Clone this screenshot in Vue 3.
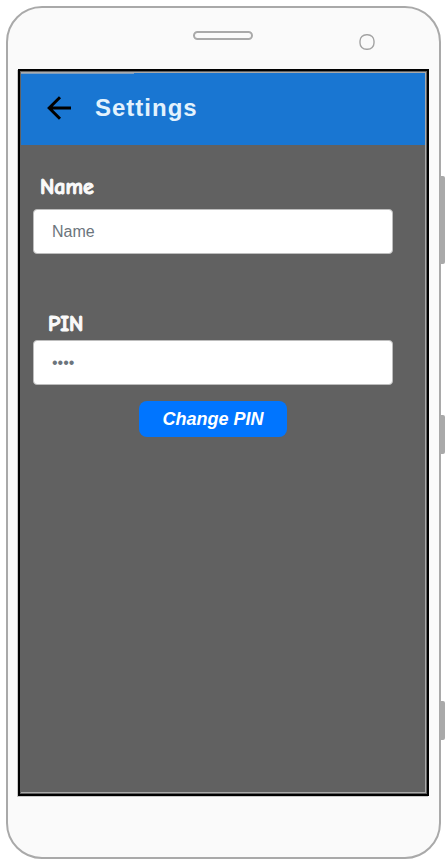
<script setup>
import { ref } from 'vue'

const name = ref('')
const pin = ref('')
</script>

<template>
  <div class="page">
    <div class="phone">
      <span class="speaker"></span>
      <svg class="camera" viewBox="0 0 16 16" width="16" height="16" fill="none" stroke="#a3a3a3" stroke-width="1.4">
        <rect x="1" y="0.7" width="14" height="14.6" rx="6.4" />
      </svg>
      <span class="side-key volume"></span>
      <span class="side-key power"></span>
      <span class="side-key lower"></span>

      <main class="screen">
        <div class="view">
          <header class="bar">
            <div class="progress"></div>
            <div class="bar-row">
              <button class="back" type="button" aria-label="Back">
                <svg viewBox="0 0 24 24" width="24" height="24" fill="none" stroke="#000" stroke-width="3">
                  <path d="M13 1.2 2.2 12 13 22.8M2.2 12H24" />
                </svg>
              </button>
              <h1>Settings</h1>
            </div>
          </header>

          <form class="form" @submit.prevent>
            <label class="name-label" for="name">Name</label>
            <input id="name" v-model="name" type="text" placeholder="Name" />
            <label class="pin-label" for="pin">PIN</label>
            <input id="pin" v-model="pin" type="password" placeholder="••••" />
            <button class="submit" type="submit">Change PIN</button>
          </form>
        </div>
      </main>
    </div>
  </div>
</template>

<style>
body {
  background: #fff;
}
</style>

<style scoped>
* {
  box-sizing: border-box;
}

.page {
  display: flex;
  min-height: 100vh;
  padding: 6px 6px 1px;
  font-family: "Liberation Sans", Arial, sans-serif;
}

.phone {
  position: relative;
  display: flex;
  flex: 1;
  padding: 61px 10px;
  border: 2px solid #a9a9a9;
  border-radius: 36px;
  background: #fafafa;
}

.speaker {
  position: absolute;
  top: 23px;
  left: 50%;
  width: 60px;
  height: 9px;
  margin-left: -31px;
  border: 2px solid #a9a9a9;
  border-radius: 5px;
}

.camera {
  position: absolute;
  top: 26px;
  right: 64px;
}

.side-key {
  position: absolute;
  right: -6px;
  width: 6px;
  height: 39px;
  border-radius: 0 2px 2px 0;
  background: #a9a9a9;
}

.volume {
  top: 168px;
  height: 88px;
}

.power {
  top: 407px;
}

.lower {
  top: 693px;
}

.screen {
  display: flex;
  flex: 1;
  border: 2px solid #000;
  box-shadow: -1px 1px 0 #c8c8c8;
  background: #616161;
}

.view {
  flex: 1;
  margin: 1px;
  border: 1px solid #aaa;
  border-left: 0;
}

.bar {
  background: #1976d2;
}

.progress {
  width: 28%;
  height: 1px;
  background: #7f9fc0;
}

.bar-row {
  display: flex;
  align-items: center;
  gap: 24px;
  height: 71px;
  padding: 0 0 3px 26px;
}

.back {
  display: flex;
  padding: 0;
  border: 0;
  background: none;
}

h1 {
  margin: 0;
  color: #e3f2fd;
  font-size: 24px;
  line-height: 28px;
  letter-spacing: 1px;
}

.form {
  display: flex;
  flex-direction: column;
  padding: 30px 32px 30px 12px;
}

label {
  color: #fafafa;
  font-family: "Comic Sans MS", "Comic Neue", Lato, sans-serif;
  font-size: 22px;
  font-weight: 700;
  line-height: 24px;
  -webkit-text-stroke: 1px #fafafa;
}

.name-label {
  margin: 0 0 10px 7px;
}

.pin-label {
  margin: 58px 0 4px 15px;
}

input {
  width: 100%;
  height: 45px;
  padding: 0 18px;
  border: 1px solid #bdbdbd;
  border-radius: 4px;
  background: #fff;
  color: #495057;
  font-family: inherit;
  font-size: 16px;
}

input::placeholder {
  color: #6c757d;
  opacity: 1;
}

.submit {
  align-self: center;
  height: 36px;
  margin-top: 16px;
  padding: 0 23px;
  border: 0;
  border-radius: 8px;
  background: #0075ff;
  color: #fff;
  font-family: inherit;
  font-size: 18px;
  font-style: italic;
  font-weight: 700;
}
</style>
